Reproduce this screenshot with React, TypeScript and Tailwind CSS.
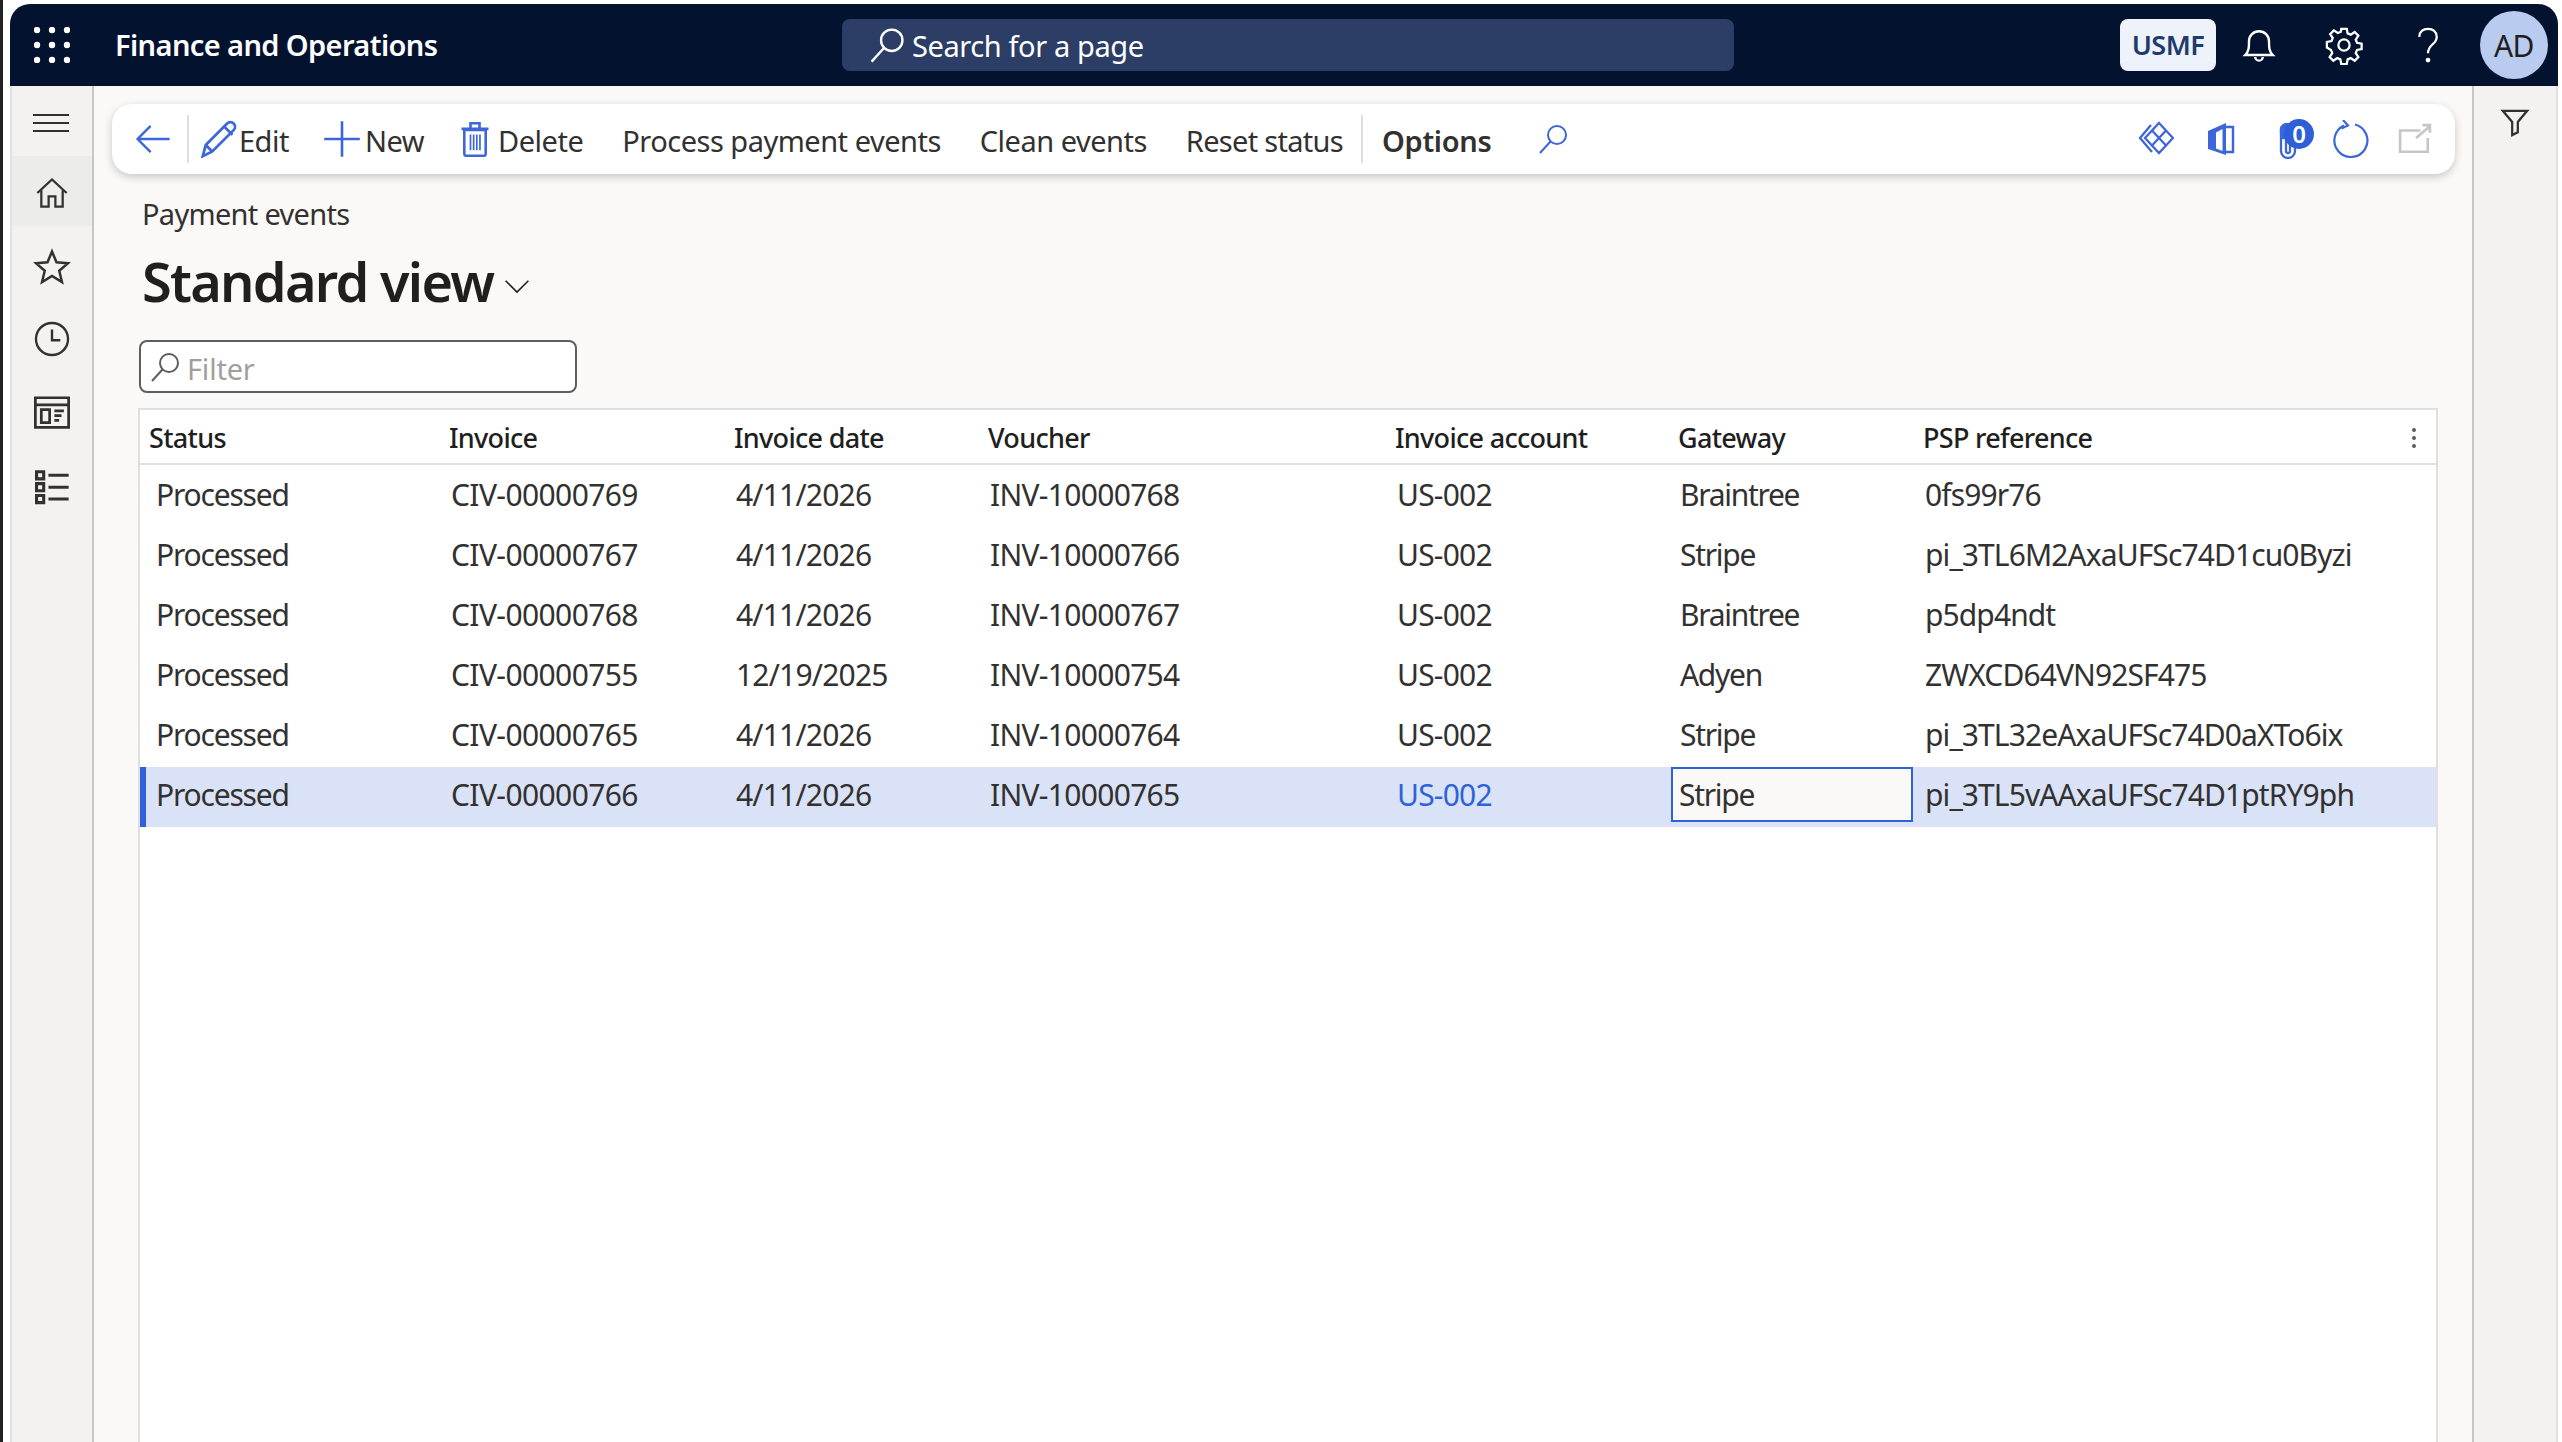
import type { ReactNode } from 'react';

const rows = [
  ['Processed', 'CIV-00000769', '4/11/2026', 'INV-10000768', 'US-002', 'Braintree', '0fs99r76'],
  ['Processed', 'CIV-00000767', '4/11/2026', 'INV-10000766', 'US-002', 'Stripe', 'pi_3TL6M2AxaUFSc74D1cu0Byzi'],
  ['Processed', 'CIV-00000768', '4/11/2026', 'INV-10000767', 'US-002', 'Braintree', 'p5dp4ndt'],
  ['Processed', 'CIV-00000755', '12/19/2025', 'INV-10000754', 'US-002', 'Adyen', 'ZWXCD64VN92SF475'],
  ['Processed', 'CIV-00000765', '4/11/2026', 'INV-10000764', 'US-002', 'Stripe', 'pi_3TL32eAxaUFSc74D0aXTo6ix'],
  ['Processed', 'CIV-00000766', '4/11/2026', 'INV-10000765', 'US-002', 'Stripe', 'pi_3TL5vAAxaUFSc74D1ptRY9ph'],
];

const gridCols = 'grid grid-cols-[300px_285px_254px_407px_283px_245px_1fr]';
const tracking = ['tracking-[-1.2px]', 'tracking-[-0.6px]', 'tracking-[-0.8px]', 'tracking-[-0.7px]', 'tracking-[-0.8px]', 'tracking-[-1.3px]', 'tracking-[-0.9px]'];

function Icon({ size, sw = 2, children, className = '' }: { size: number; sw?: number; children: ReactNode; className?: string }) {
  return (
    <svg width={size} height={size} viewBox="0 0 32 32" fill="none" stroke="currentColor" strokeWidth={sw} className={'shrink-0 ' + className}>
      {children}
    </svg>
  );
}

const SearchGlass = () => (
  <>
    <circle cx="20" cy="12" r="9" />
    <path d="M13.5 18.5 3 30" />
  </>
);

function TextButton({ label, className = 'tracking-[-0.5px]' }: { label: string; className?: string }) {
  return <span className={'text-[29px] leading-none mt-[2px] text-[#323130] whitespace-nowrap ' + className}>{label}</span>;
}

export default function App() {
  return (
    <div className="w-[2562px] h-[1442px] overflow-hidden bg-white flex font-['Noto_Sans',sans-serif]">
      <div className="w-[3px] bg-[#222222]" />
      <div className="w-[7px]" />
      <div className="w-[2548px] flex flex-col pt-[4px]">
        <header className="h-[82px] shrink-0 bg-[#02122f] rounded-t-[20px] flex items-center text-white">
          <svg width="36" height="36" viewBox="0 0 36 36" fill="white" className="ml-[24px] shrink-0">
            {[3, 18, 33].flatMap((y) => [3, 18, 33].map((x) => <circle key={x + '-' + y} cx={x} cy={y} r="3.2" />))}
          </svg>
          <span className="ml-[45px] w-[727px] text-[29px] font-semibold tracking-[-0.6px] whitespace-nowrap">Finance and Operations</span>
          <div className="w-[892px] h-[52px] bg-[#2c3e66] rounded-[8px] flex items-center pl-[26px]">
            <Icon size={38}><SearchGlass /></Icon>
            <span className="ml-[6px] mt-[2px] text-[29px] tracking-[-0.4px]">Search for a page</span>
          </div>
          <div className="ml-[386px] w-[96px] h-[52px] rounded-[8px] bg-[#eef2fb] text-[#1f3a6e] text-[27px] font-semibold tracking-[-0.5px] flex items-center justify-center">USMF</div>
          <Icon size={40} sw={1.9} className="ml-[23px]">
            <path d="M5 24c3-3 3-6 3-11a8 8 0 0 1 16 0c0 5 0 8 3 11Z" />
            <path d="M13 25.500a3 3 0 0 0 6 0" />
          </Icon>
          <Icon size={40} sw={1.8} className="ml-[45px]">
            <circle cx="16" cy="16" r="4.5" />
            <path d="M13.8 3h4.4l.7 3.7 2.5 1 3.1-2.1 3 3-2.1 3.1 1 2.5 3.7.7v4.4l-3.7.7-1 2.5 2.1 3.1-3 3-3.1-2.1-2.500 1-.7 3.700h-4.400l-.7-3.700-2.500-1-3.100 2.100-3-3 2.100-3.100-1-2.500L2.300 18v-4.400l3.700-.7 1-2.500-2.100-3.100 3-3 3.100 2.100 2.500-1Z" />
          </Icon>
          <Icon size={40} sw={1.8} className="ml-[44px]">
            <path d="M9 9.500C9 5.500 12 3 16 3s7 2.500 7 6.500c0 6-7 6-7 13" />
            <circle cx="16" cy="28" r="1" fill="currentColor" />
          </Icon>
          <div className="ml-[32px] w-[68px] h-[68px] rounded-full bg-[#b9cbee] text-[#201f1e] text-[30px] tracking-[-0.5px] flex items-center justify-center">AD</div>
        </header>

        <div className="flex-1 flex min-h-0">
          <nav className="w-[84px] shrink-0 bg-[#f3f2f1] border-l-2 border-r-2 border-l-[#e1e1e1] border-r-[#c8c6c4] flex flex-col items-center text-[#323130]">
            <svg width="36" height="20" viewBox="0 0 36 20" stroke="currentColor" strokeWidth="2" className="mt-[27px] -ml-[2px]">
              <path d="M0 2h36M0 10h36M0 18h36" />
            </svg>
            <div className="mt-[23px] w-full h-[70px] bg-[#ececeb] flex items-center justify-center pt-[3px]">
              <Icon size={36}>
                <path d="M3 16 16 4l13 12" />
                <path d="M6.500 13.500V28H13v-9h6v9h6.500V13.500" />
              </Icon>
            </div>
            <Icon size={38} sw={2.1} className="mt-[22px]">
              <path d="m16 3 3.800 9 9.700.8-7.400 6.400 2.300 9.500L16 23.600l-8.400 5.100 2.300-9.500-7.400-6.400 9.700-.8Z" />
            </Icon>
            <Icon size={38} className="mt-[34px]">
              <circle cx="16" cy="16" r="13.500" />
              <path d="M16 8v9h7" />
            </Icon>
            <Icon size={38} sw={2.300} className="mt-[35px]">
              <path d="M2 4h28v25H2ZM2 10h28M7 14h7v11H7ZM18 15h8M18 19h6M18 23h4" />
            </Icon>
            <Icon size={38} sw={2.600} className="mt-[36px]">
              <path d="M3 4h6v6H3ZM3 14h6v6H3ZM3 24h6v6H3ZM13 7h17M13 17h17M13 27h17" />
            </Icon>
          </nav>

          <main className="flex-1 min-w-0 bg-[#faf9f8] pt-[18px]">
            <div className="ml-[18px] w-[2343px] h-[70px] bg-white rounded-[20px] shadow-[0_3px_8px_rgba(0,0,0,0.2)] flex items-center text-[#3d66d9]">
              <Icon size={38} className="ml-[22px]">
                <path d="M30 16H3M14 5 3 16l11 11" />
              </Icon>
              <div className="ml-[15px] w-[2px] h-[48px] bg-[#e1dfdd]" />
              <Icon size={38} sw={2.300} className="ml-[12px]">
                <path d="M1.500 30.500 4 21 22 3c1.500-1.500 4-1.500 5.500 0s1.500 4 0 5.500L9.500 26.500Z" />
                <path d="m19.500 5.500 7 7M4 21l5.500 5.500" />
              </Icon>
              <TextButton label="Edit" className="ml-[0px] tracking-[-0.5px]" />
              <Icon size={38} sw={2.200} className="ml-[34px]">
                <path d="M16 1v30M1 16h30" />
              </Icon>
              <TextButton label="New" className="ml-[4px] tracking-[-0.5px]" />
              <Icon size={36} sw={2.300} className="ml-[33px]">
                <path d="M6.500 8h19v21a2 2 0 0 1-2 2h-15a2 2 0 0 1-2-2ZM4 7h24M12 6V2h8v4" />
                <path d="M12 12v14M14.800 12v14M17.600 12v14M20.400 12v14" strokeWidth="1.500" />
              </Icon>
              <TextButton label="Delete" className="ml-[5px] tracking-[-0.5px]" />
              <TextButton label="Process payment events" className="ml-[39px] tracking-[-0.5px]" />
              <TextButton label="Clean events" className="ml-[39px] tracking-[-0.5px]" />
              <TextButton label="Reset status" className="ml-[39px] tracking-[-0.7px]" />
              <div className="ml-[18px] w-[2px] h-[48px] bg-[#e1dfdd]" />
              <TextButton label="Options" className="ml-[19px] font-semibold tracking-[-0.3px]" />
              <Icon size={32} className="ml-[45px]"><SearchGlass /></Icon>
              <div className="flex-1" />
              <svg width="36" height="36" viewBox="0 0 36 36" fill="none" stroke="#3d66d9" strokeWidth="2.300" className="shrink-0">
                <path d="M13 4 2 17l12 14" />
                <path d="M21 2 35 17 21 32 7 17Z" />
                <path d="M14 9.500 28 24.500M28 9.500 14 24.500" />
              </svg>
              <svg width="28" height="34" viewBox="0 0 28 34" className="ml-[33px] shrink-0">
                <path d="M1 9 19 1v32L1 27Z" fill="#3d66d9" />
                <path d="M9 10.500 15.500 7v22L9 26.500Z" fill="white" />
                <path d="M18 5h8v25h-8" fill="none" stroke="#3d66d9" strokeWidth="2.400" />
              </svg>
              <div className="ml-[44px] relative w-[35px] h-[40px]">
                <svg width="18" height="36" viewBox="0 0 18 36" fill="none" stroke="#3d66d9" strokeWidth="2.300" className="absolute left-0 top-[4px]">
                  <path d="M2 6v22a7 7 0 0 0 14 0v-6M7 14v14a2 2 0 0 0 4 0V20" />
                  <path d="M2 10V6c0-3 3-5 6-5h6v14H4Z" fill="#3d66d9" />
                </svg>
                <span className="absolute left-[5px] top-0 w-[30px] h-[30px] rounded-full bg-[#2f5fd8] text-white text-[24px] font-semibold leading-none flex items-center justify-center">0</span>
              </div>
              <svg width="36" height="38" viewBox="0 0 36 38" fill="none" stroke="#3d66d9" strokeWidth="2.200" className="ml-[19px] shrink-0">
                <path d="M22 4.500A16.500 16.500 0 1 1 11 5.500" />
                <path d="M10 0l5 5.500-6.500 3" />
              </svg>
              <Icon size={34} sw={2.500} className="ml-[29px] text-[#c8c6c4]">
                <path d="M21 8H2v20h26V15M17 15 30 4M23 3h7v7" />
              </Icon>
              <div className="w-[23px] shrink-0" />
            </div>

            <div className="ml-[48px] mt-[21px] text-[29px] leading-[38px] tracking-[-0.7px] text-[#323130]">Payment events</div>
            <div className="ml-[48px] mt-[15px] h-[66px] flex items-center text-[#201f1e]">
              <span className="text-[54px] font-semibold leading-none tracking-[-1.7px]">Standard view</span>
              <Icon size={28} sw={1.8} className="ml-[10px] mt-[10px]"><path d="m3 10 13 13 13-13" /></Icon>
            </div>
            <div className="ml-[45px] mt-[26px] w-[438px] h-[53px] bg-white border-2 border-[#605e5c] rounded-[8px] flex items-center pl-[8px]">
              <Icon size={32} className="text-[#605e5c]"><SearchGlass /></Icon>
              <span className="ml-[6px] mt-[5px] text-[29px] tracking-[-0.2px] text-[#a19f9d]">Filter</span>
            </div>

            <div className="ml-[44px] mt-[15px] w-[2300px] h-[1100px] bg-white border-x-2 border-t-2 border-[#e1dfdd]">
              <div className={gridCols + ' relative h-[55px] mb-[2px] items-center pt-[3px] border-b-2 border-[#e1dfdd] text-[27px] font-medium tracking-[-0.7px] text-[#201f1e]'}>
                {['Status', 'Invoice', 'Invoice date', 'Voucher', 'Invoice account', 'Gateway', 'PSP reference'].map((h) => (
                  <span key={h} className="pl-[9px] whitespace-nowrap">{h}</span>
                ))}
                <svg width="6" height="22" viewBox="0 0 6 22" fill="#605e5c" className="absolute right-[19px] top-[17px]">
                  <circle cx="3" cy="3" r="2" />
                  <circle cx="3" cy="11" r="2" />
                  <circle cx="3" cy="19" r="2" />
                </svg>
              </div>
              {rows.map((r, i) => {
                const selected = i === rows.length - 1;
                return (
                  <div
                    key={r[1]}
                    className={gridCols + ' h-[60px] items-center text-[30px] text-[#323130] ' + (selected ? 'bg-[#d9e2f7]' : '')}
                  >
                    {r.map((c, j) => {
                      if (j === 0) {
                        return (
                          <span key={j} className={'h-full flex items-center pl-[10px] pb-[6px] border-l-[6px] ' + tracking[j] + ' ' + (selected ? 'border-[#2f62d8]' : 'border-transparent')}>{c}</span>
                        );
                      }
                      if (j === 4) {
                        return <span key={j} className={'pl-[11px] pb-[6px] ' + tracking[j] + ' ' + (selected ? 'text-[#2f62d8]' : '')}>{c}</span>;
                      }
                      if (j === 5 && selected) {
                        return (
                          <span key={j} className={'ml-[2px] w-[242px] h-[55px] self-start flex items-center pl-[6px] pb-[1px] bg-[#faf9f8] border-2 border-[#2f62d8] ' + tracking[j]}>{c}</span>
                        );
                      }
                      return <span key={j} className={'pl-[11px] pb-[6px] whitespace-nowrap ' + tracking[j]}>{c}</span>;
                    })}
                  </div>
                );
              })}
            </div>
          </main>

          <aside className="w-[86px] shrink-0 bg-[#f3f2f1] border-l-2 border-r-2 border-l-[#c8c6c4] border-r-[#e1e1e1] flex justify-center pt-[21px] text-[#323130]">
            <Icon size={30} sw={2.400}><path d="M3 4h26L19 16v11l-6 3V16Z" /></Icon>
          </aside>
        </div>
      </div>
    </div>
  );
}
